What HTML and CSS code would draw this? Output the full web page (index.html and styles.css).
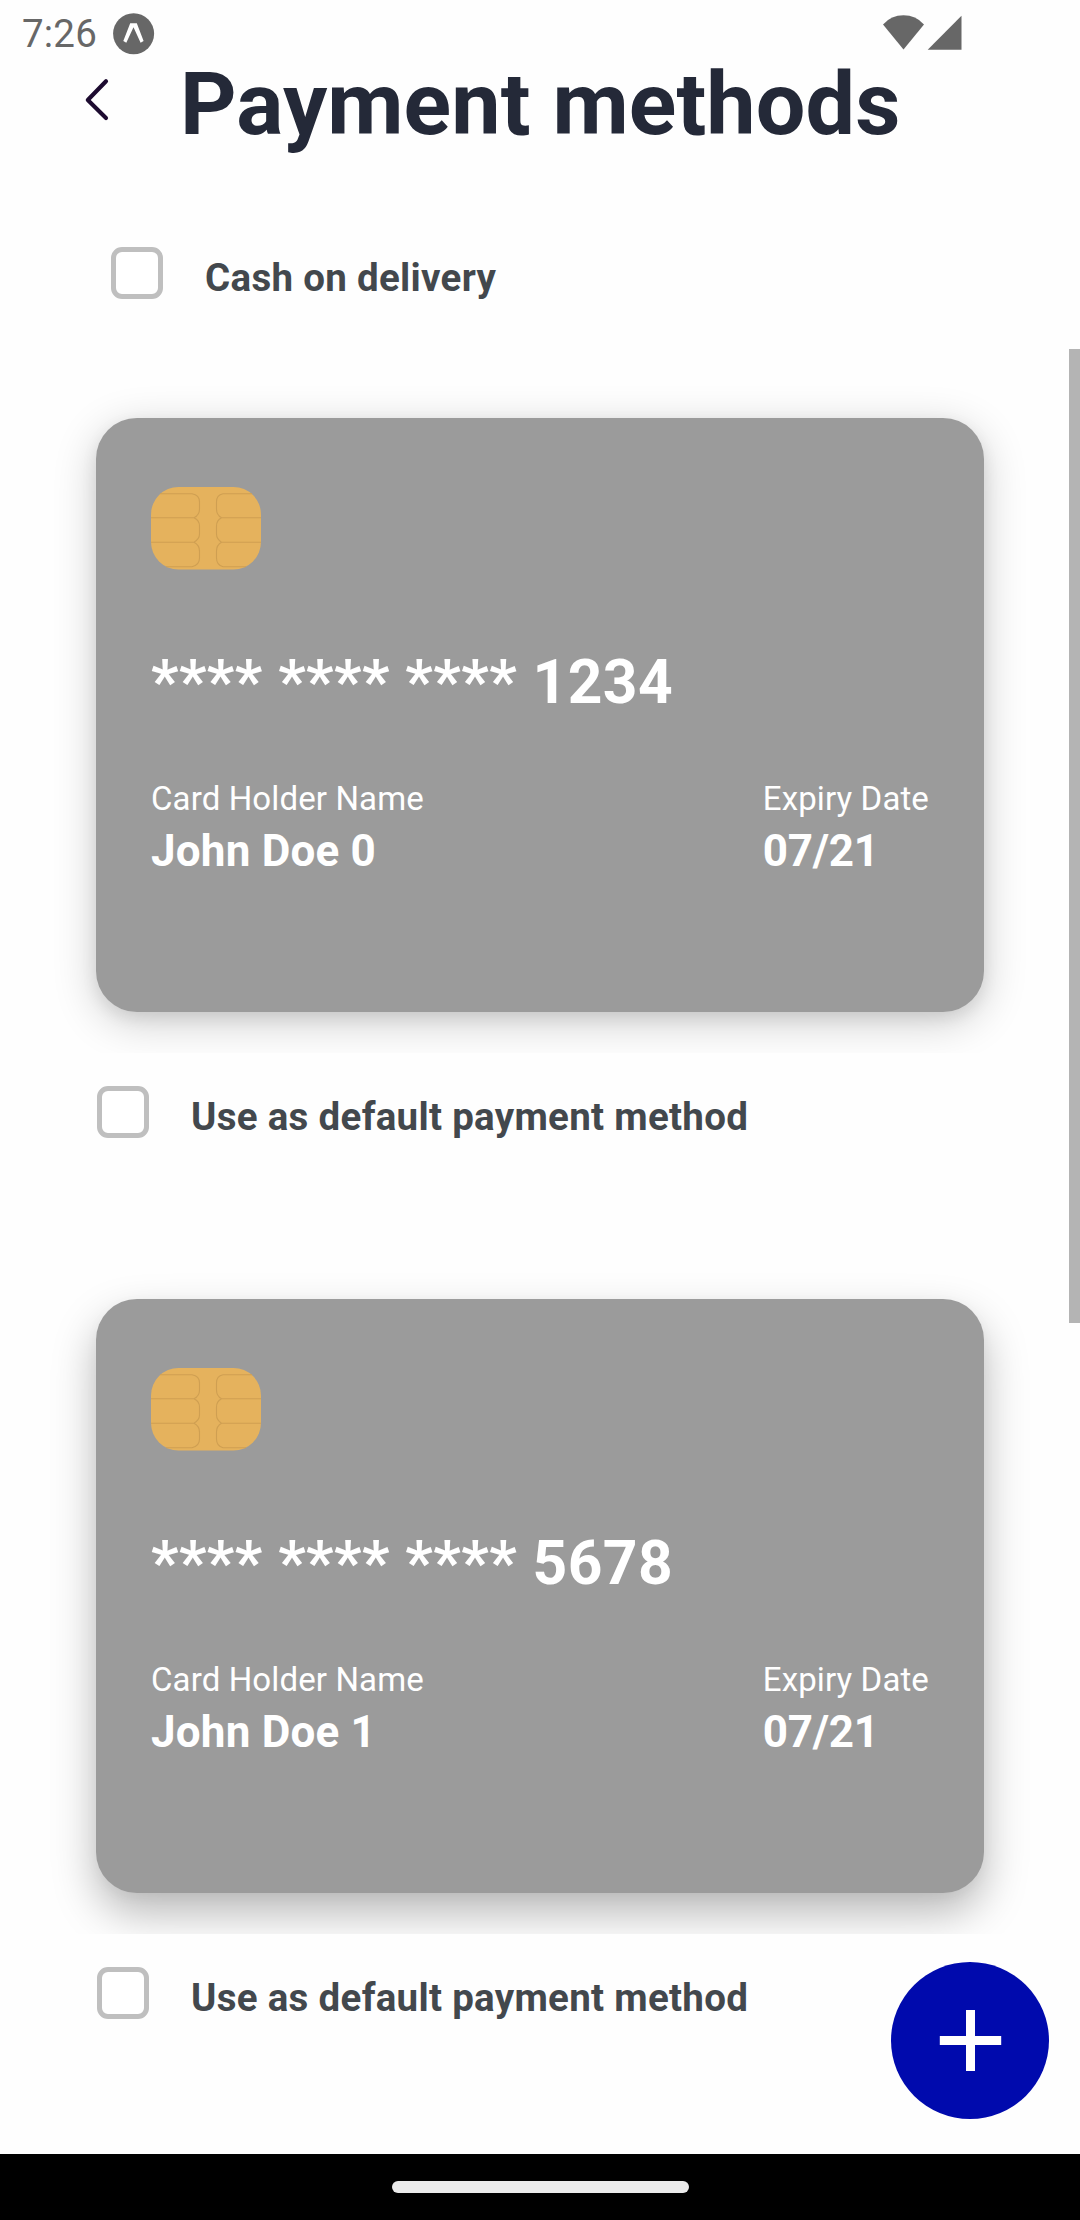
FILE: index.html
```html
<!DOCTYPE html>
<html lang="en">
<head>
<meta charset="utf-8">
<title>Payment methods</title>
<link rel="stylesheet" href="styles.css">
</head>
<body>
<div class="screen">
  <div class="status">
    <span class="time">7:26</span>
    <svg class="expo" width="42" height="42" viewBox="0 0 42 42"><circle cx="20.600" cy="20.700" r="20.500" fill="#676767"/><path d="M17.200 10.200h6.600L30.600 28 27.600 29.800 20.500 14.300 13.300 29.800 10.300 28z" fill="#fff"/></svg>
    <svg class="signals" width="79" height="36" viewBox="0 0 79 36"><path d="M0 9.400Q8.300 .3 20.500 .3T41 9.400L20.500 34.500z" fill="#676767"/><path d="M78.500 .7V34.800H44.700z" fill="#676767"/></svg>
  </div>
  <header class="header">
    <svg class="back" width="26" height="44" viewBox="0 0 26 44"><path d="M22 3.200 3.800 22 22 40" fill="none" stroke="#1d0b30" stroke-width="4.100" stroke-linecap="round" stroke-linejoin="round"/></svg>
    <h1 class="title">Payment methods</h1>
  </header>
  <main class="list">
    <label class="option option-cash"><span class="box"></span><span class="text">Cash on delivery</span></label>
    <section class="method">
      <div class="shade"><article class="card">
        <svg class="chip" width="110" height="83" viewBox="0 0 110 83"><rect width="110" height="82.500" rx="27.500" fill="#e5b25d"/><g fill="none" stroke="#cf9f52" stroke-width="1.100"><path d="M9 6.800H41Q48.500 8 48.500 15V22Q48.500 28 43 30.800H0M43 30.800Q48.500 33.500 48.500 39V47Q48.500 52 43 55.200H0M43 55.200Q48.500 58 48.500 64V71Q48.500 78 41 79.700H15"/><path d="M101 6.800H72Q65.500 8 65.500 15V22Q65.500 28 70.500 30.800H110M70.500 30.800Q65.500 33.500 65.500 39V47Q65.500 52 70.500 55.200H110M70.500 55.200Q65.500 58 65.500 64V71Q65.500 78 72 79.700H95"/></g></svg>
        <p class="number">**** **** **** 1234</p>
        <div class="details">
          <div><p class="label">Card Holder Name</p><p class="value">John Doe 0</p></div>
          <div><p class="label">Expiry Date</p><p class="value value-date">07/21</p></div>
        </div>
      </article></div>
      <label class="option"><span class="box"></span><span class="text">Use as default payment method</span></label>
    </section>
    <section class="method method-last">
      <div class="shade"><article class="card">
        <svg class="chip" width="110" height="83" viewBox="0 0 110 83"><rect width="110" height="82.500" rx="27.500" fill="#e5b25d"/><g fill="none" stroke="#cf9f52" stroke-width="1.100"><path d="M9 6.800H41Q48.500 8 48.500 15V22Q48.500 28 43 30.800H0M43 30.800Q48.500 33.500 48.500 39V47Q48.500 52 43 55.200H0M43 55.200Q48.500 58 48.500 64V71Q48.500 78 41 79.700H15"/><path d="M101 6.800H72Q65.500 8 65.500 15V22Q65.500 28 70.500 30.800H110M70.500 30.800Q65.500 33.500 65.500 39V47Q65.500 52 70.500 55.200H110M70.500 55.200Q65.500 58 65.500 64V71Q65.500 78 72 79.700H95"/></g></svg>
        <p class="number">**** **** **** 5678</p>
        <div class="details">
          <div><p class="label">Card Holder Name</p><p class="value">John Doe 1</p></div>
          <div><p class="label">Expiry Date</p><p class="value value-date">07/21</p></div>
        </div>
      </article></div>
      <label class="option"><span class="box"></span><span class="text">Use as default payment method</span></label>
    </section>
  </main>
  <nav class="navbar"><span class="pill"></span></nav>
  <span class="scrollbar"></span>
  <button class="add" aria-label="Add"><svg width="63" height="63" viewBox="0 0 63 63"><path d="M31.500 1v61M.8 31.500h61.400" stroke="#fff" stroke-width="9"/></svg></button>
</div>
</body>
</html>
```
FILE: styles.css
```css
* { box-sizing: border-box; margin: 0; padding: 0; }
body { background: #fefefe; font-family: Roboto, "Liberation Sans", sans-serif; }
.screen { position: relative; display: flex; flex-direction: column; width: 1080px; height: 2220px; overflow: hidden; background: #fefefe; }
.status { display: flex; flex-shrink: 0; height: 62px; padding: 13px 118px 0 22px; }
.time { width: 91px; font-size: 38.5px; line-height: 42px; color: #676767; letter-spacing: .2px; }
.signals { margin: 2px 0 0 auto; }
.header { display: flex; flex-shrink: 0; height: 178px; padding-left: 84px; }
.back { margin-top: 16px; }
.title { margin-left: 70px; font-size: 88px; line-height: 84px; font-weight: 700; color: #242938; letter-spacing: .1px; white-space: nowrap; }
.list { display: flex; flex-direction: column; flex: 1; min-height: 0; overflow: hidden; }
.option { display: flex; gap: 42px; padding-left: 1px; }
.option-cash { flex-shrink: 0; height: 178px; padding: 7px 0 0 111px; }
.box { width: 52px; height: 52px; border: 5px solid #bfbfbf; border-radius: 11px; background: #fff; }
.text { margin-top: 8px; font-size: 38.5px; line-height: 46px; font-weight: 700; color: #43484d; letter-spacing: .3px; white-space: nowrap; }
.method { flex-shrink: 0; height: 881px; padding: 0 96px; }
.shade { height: 695px; margin: -60px -60px 0; padding: 60px 60px 0; overflow: hidden; }
.method .option { margin-top: 33px; }
.card { height: 594px; padding: 69px 55px 0; border-radius: 41px; background: #9b9b9b; color: #fff; box-shadow: 0 10px 44px rgba(0, 0, 0, .2), 0 6px 16px rgba(0, 0, 0, .08); }
.method-last .card { box-shadow: 0 20px 44px rgba(0, 0, 0, .28), 0 4px 14px rgba(0, 0, 0, .03); }
.chip { display: block; }
.number { margin-top: 78px; font-size: 60.5px; line-height: 70px; font-weight: 700; letter-spacing: .45px; white-space: nowrap; }
.details { display: flex; justify-content: space-between; margin-top: 61px; }
.label { font-size: 33px; line-height: 40px; letter-spacing: .12px; }
.value { font-size: 44px; line-height: 52px; margin-top: 6px; font-weight: 700; letter-spacing: .2px; }
.value-date { letter-spacing: -.3px; }
.navbar { display: flex; flex-shrink: 0; align-items: center; justify-content: center; height: 66px; background: #000; }
.pill { width: 297px; height: 12px; border-radius: 6px; background: #ebebeb; }
.scrollbar { position: absolute; right: 0; top: 349px; width: 11px; height: 974px; background: #b4b4b4; }
.add { position: absolute; left: 891px; top: 1962px; display: flex; align-items: center; justify-content: center; width: 158px; height: 157px; border: 0; border-radius: 50%; background: #000aad; }
```
